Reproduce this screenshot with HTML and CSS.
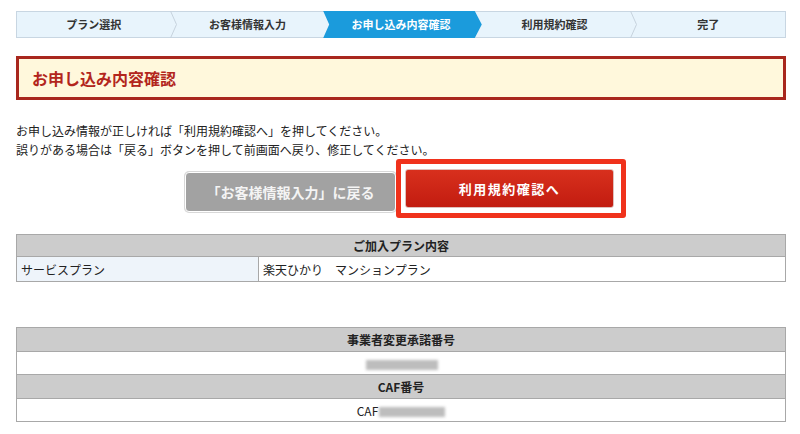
FILE: index.html
```html
<!DOCTYPE html>
<html lang="ja">
<head>
<meta charset="utf-8">
<title>お申し込み内容確認</title>
<link rel="stylesheet" href="styles.css">
</head>
<body>
<div class="page">
  <ol class="steps">
    <li class="step">プラン選択<svg class="sep" width="8" height="27" viewBox="0 0 8 27"><polyline points="0.5,0 6.5,13.5 0.5,27" fill="none" stroke="#c6d3dd" stroke-width="1"/></svg></li>
    <li class="step">お客様情報入力</li>
    <li class="step active">お申し込み内容確認</li>
    <li class="step">利用規約確認<svg class="sep" width="8" height="27" viewBox="0 0 8 27"><polyline points="0.5,0 6.5,13.5 0.5,27" fill="none" stroke="#c6d3dd" stroke-width="1"/></svg></li>
    <li class="step">完了</li>
  </ol>

  <h1 class="title">お申し込み内容確認</h1>

  <p class="lead">お申し込み情報が正しければ「利用規約確認へ」を押してください。<br>誤りがある場合は「戻る」ボタンを押して前画面へ戻り、修正してください。</p>

  <div class="actions">
    <button class="btn-back" type="button">「お客様情報入力」に戻る</button>
    <div class="highlight">
      <button class="btn-next" type="button">利用規約確認へ</button>
    </div>
  </div>

  <table class="plan">
    <tr><th colspan="2">ご加入プラン内容</th></tr>
    <tr><td class="label">サービスプラン</td><td>楽天ひかり　マンションプラン</td></tr>
  </table>

  <table class="numbers">
    <tr><th>事業者変更承諾番号</th></tr>
    <tr><td><span class="blur b1"></span></td></tr>
    <tr><th>CAF番号</th></tr>
    <tr><td>CAF<span class="blur b2"></span></td></tr>
  </table>
</div>
</body>
</html>
```
FILE: styles.css
```css
* { box-sizing: border-box; }
html, body { margin: 0; padding: 0; background: #fff; }
body {
  font-family: "Noto Sans CJK JP", "Noto Sans", "Liberation Sans", sans-serif;
  color: #222;
}
.page {
  width: 770px;
  margin-left: 16px;
  padding-top: 11px;
}
.steps {
  list-style: none;
  margin: 0;
  padding: 0;
  display: flex;
  height: 27px;
  border: 1px solid #c8d6e2;
  background: #e8f4fc;
}
.step {
  flex: 1;
  position: relative;
  text-align: center;
  font-size: 11px;
  font-weight: bold;
  line-height: 25px;
  color: #333;
}
.sep {
  position: absolute;
  top: -1px;
  right: -7px;
  z-index: 1;
}
.step.active {
  color: #fff;
  z-index: 2;
}
.step.active::before {
  content: "";
  position: absolute;
  top: -1px;
  bottom: -1px;
  left: -1px;
  right: -4px;
  background: #1b9bdc;
  clip-path: polygon(0 0, calc(100% - 7px) 0, 100% 50%, calc(100% - 7px) 100%, 0 100%, 6px 50%);
  z-index: -1;
}
.title {
  margin: 18px 0 0;
  height: 44px;
  border: 3px solid #a8271d;
  background: #fff8dc;
  color: #b3261c;
  font-size: 16px;
  font-weight: bold;
  line-height: 38px;
  padding-left: 13px;
}
.lead {
  margin: 21px 0 0;
  font-size: 12px;
  line-height: 19px;
  color: #222;
}
.actions {
  display: flex;
  align-items: flex-start;
  margin-left: 169px;
}
.btn-back {
  margin-top: 13px;
  width: 211px;
  height: 40px;
  border: 1px solid #fff;
  border-radius: 4px;
  box-shadow: 0 0 0 1px #d8d8d8;
  background: #a2a2a2;
  color: #f4f4f4;
  font-family: inherit;
  font-size: 14px;
  font-weight: bold;
  padding: 0;
}
.highlight {
  width: 230px;
  height: 59px;
  border: 5px solid #f0321c;
  border-radius: 3px;
  padding: 5px 6px 0 4px;
  background: #fff;
}
.btn-next {
  display: block;
  width: 209px;
  height: 39px;
  border: 1px solid #e0c0bc;
  border-radius: 3px;
  background: linear-gradient(#d8301d, #c21c10);
  color: #fff;
  font-family: inherit;
  font-size: 13px;
  font-weight: bold;
  letter-spacing: 1.5px;
  padding: 0;
}
table {
  width: 770px;
  border-collapse: collapse;
  font-size: 12px;
}
th, td {
  border: 1px solid #a8a8a8;
  padding: 0 4px;
}
th {
  background: #cccccc;
  font-weight: bold;
  color: #222;
  text-align: center;
}
.plan { margin-top: 16px; }
.plan th { height: 22px; }
.plan td { height: 25px; }
.plan td.label {
  width: 242px;
  background: #eef4fa;
}
.numbers { margin-top: 45px; }
.numbers th { height: 24px; }
.numbers td {
  height: 23px;
  text-align: center;
  background: #fff;
}
.blur {
  display: inline-block;
  height: 10px;
  background: #bdbdbd;
  filter: blur(1.5px);
  vertical-align: middle;
}
.b1 { width: 72px; margin-left: 2px; }
.b2 { width: 66px; margin-left: 1px; }
```
